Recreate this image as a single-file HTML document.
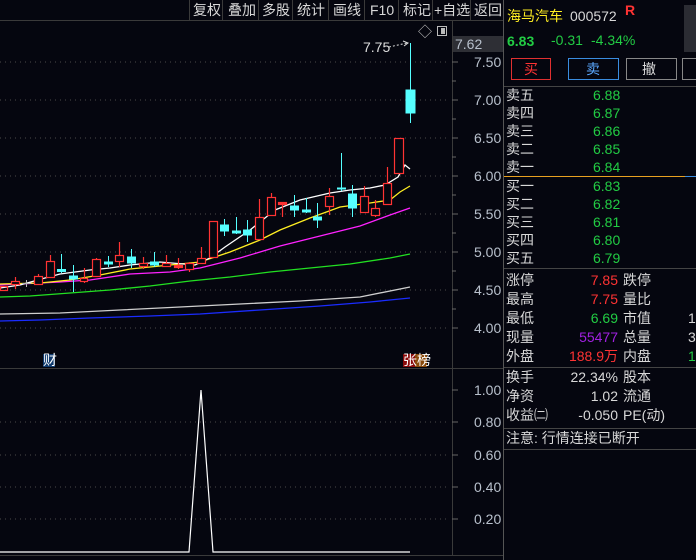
<!DOCTYPE html>
<html><head><meta charset="utf-8"><style>
html,body{margin:0;padding:0;background:#05060f;width:696px;height:560px;overflow:hidden}
svg{display:block}
text{font-family:"Liberation Sans","Noto Sans CJK SC",sans-serif;font-size:14px}
</style></head><body>
<svg width="696" height="560" viewBox="0 0 696 560" xmlns="http://www.w3.org/2000/svg">
<rect width="696" height="560" fill="#05060f"/>
<!-- toolbar -->
<g fill="#d8d8d8" font-size="13">
<text x="193" y="15" font-size="13">复权</text><text x="228" y="15" font-size="13">叠加</text><text x="262" y="15" font-size="13">多股</text>
<text x="297" y="15" font-size="13">统计</text><text x="333" y="15" font-size="13">画线</text><text x="370" y="15" font-size="13">F10</text>
<text x="403" y="15" font-size="13">标记</text><text x="434" y="15" font-size="13">+自选</text><text x="474" y="15" font-size="13">返回</text>
</g>
<g stroke="#3a3a3a" stroke-width="1">
<line x1="189.5" y1="0" x2="189.5" y2="20"/><line x1="222.5" y1="0" x2="222.5" y2="20"/>
<line x1="258.5" y1="0" x2="258.5" y2="20"/><line x1="292.5" y1="0" x2="292.5" y2="20"/>
<line x1="328.5" y1="0" x2="328.5" y2="20"/><line x1="364.5" y1="0" x2="364.5" y2="20"/>
<line x1="398.5" y1="0" x2="398.5" y2="20"/><line x1="432.5" y1="0" x2="432.5" y2="20"/>
<line x1="470.5" y1="0" x2="470.5" y2="20"/>
<line x1="0" y1="20.5" x2="503" y2="20.5"/>
<line x1="452.5" y1="20" x2="452.5" y2="556"/>
<line x1="0" y1="368.5" x2="503" y2="368.5"/>
<line x1="0" y1="555.5" x2="503" y2="555.5"/>
</g>
<line x1="503.5" y1="0" x2="503.5" y2="560" stroke="#555" />
<!-- grid -->
<g stroke="#4a4a4a" stroke-dasharray="1,4">
<line x1="0" y1="62" x2="450" y2="62"/><line x1="0" y1="100" x2="450" y2="100"/>
<line x1="0" y1="138" x2="450" y2="138"/><line x1="0" y1="176" x2="450" y2="176"/>
<line x1="0" y1="214" x2="450" y2="214"/><line x1="0" y1="252" x2="450" y2="252"/>
<line x1="0" y1="290" x2="450" y2="290"/><line x1="0" y1="328" x2="450" y2="328"/>
<line x1="0" y1="422" x2="450" y2="422"/><line x1="0" y1="455" x2="450" y2="455"/>
<line x1="0" y1="487" x2="450" y2="487"/><line x1="0" y1="519" x2="450" y2="519"/>
</g>
<g stroke="#666">
<line x1="452" y1="62" x2="458" y2="62"/><line x1="452" y1="81" x2="456" y2="81"/><line x1="452" y1="100" x2="458" y2="100"/>
<line x1="452" y1="119" x2="456" y2="119"/><line x1="452" y1="138" x2="458" y2="138"/><line x1="452" y1="157" x2="456" y2="157"/>
<line x1="452" y1="176" x2="458" y2="176"/><line x1="452" y1="195" x2="456" y2="195"/><line x1="452" y1="214" x2="458" y2="214"/>
<line x1="452" y1="233" x2="456" y2="233"/><line x1="452" y1="252" x2="458" y2="252"/><line x1="452" y1="271" x2="456" y2="271"/>
<line x1="452" y1="290" x2="458" y2="290"/><line x1="452" y1="309" x2="456" y2="309"/><line x1="452" y1="328" x2="458" y2="328"/>
<line x1="452" y1="390" x2="458" y2="390"/><line x1="452" y1="422" x2="458" y2="422"/><line x1="452" y1="455" x2="458" y2="455"/>
<line x1="452" y1="487" x2="458" y2="487"/><line x1="452" y1="519" x2="458" y2="519"/>
</g>
<rect x="453" y="36" width="50" height="16" fill="#2e2f35"/>
<g fill="#b8c0cc">
<text x="455" y="49">7.62</text>
<text x="474" y="67">7.50</text><text x="474" y="105">7.00</text><text x="474" y="143">6.50</text>
<text x="474" y="181">6.00</text><text x="474" y="219">5.50</text><text x="474" y="257">5.00</text>
<text x="474" y="295">4.50</text><text x="474" y="333">4.00</text>
<text x="474" y="395">1.00</text><text x="474" y="427">0.80</text><text x="474" y="460">0.60</text>
<text x="474" y="492">0.40</text><text x="474" y="524">0.20</text>
</g>
<text x="418" y="37" fill="#bbb" font-size="12">◇</text>
<rect x="437.5" y="26.5" width="9" height="9" fill="none" stroke="#bbb"/><rect x="441" y="28" width="4" height="6" fill="#bbb"/>
<text x="363" y="52" fill="#ddd" font-size="13">7.75</text>
<path d="M389 47 L407 43" stroke="#ddd" stroke-dasharray="2,2"/><path d="M403 41 L408 43 L404 46" stroke="#ddd" fill="none"/>
<!-- MA lines -->
<g fill="none" stroke-width="1.3">
<polyline stroke="#1a2cff" points="0,321 40,320 90,318 150,316 200,314 260,310 320,306 370,302 410,298"/>
<polyline stroke="#cfcfcf" points="0,314 60,313 120,310 180,307 240,304 300,301 360,297 410,287"/>
<polyline stroke="#22e022" points="0,297 30,296 70,293 110,290 150,286 190,281 230,277 270,272 310,268 350,264 390,258 410,254"/>
<polyline stroke="#ff22ff" points="0,285 60,282 90,280 130,274 170,272 200,268 240,258 280,246 320,236 360,226 390,215 410,208"/>
<polyline stroke="#ffee22" points="0,284 40,283 70,280 100,275 130,269 160,266 200,262 230,252 260,240 280,230 310,218 340,207 370,203 390,200 400,192 410,186"/>
<polyline stroke="#ffffff" points="0,288 20,285 45,278 60,274 90,270 110,268 130,265 160,262 195,265 210,258 225,247 250,230 275,210 300,200 330,193 350,190 370,188 385,185 398,177 405,165 410,169"/>
</g>
<!-- candles -->
<g stroke="#ff3333" fill="none" stroke-width="1.2">
<rect x="0.5" y="286.5" width="7" height="4"/>
<line x1="15.5" y1="277" x2="15.5" y2="289"/><rect x="11.5" y="281.5" width="8" height="3" fill="#05060f"/>
<line x1="38.5" y1="274" x2="38.5" y2="284"/><rect x="34.5" y="276.5" width="8" height="8" fill="#05060f"/>
<line x1="50.5" y1="255" x2="50.5" y2="277"/><rect x="46.5" y="261.5" width="8" height="16" fill="#05060f"/>
<line x1="84.5" y1="268" x2="84.5" y2="283"/><rect x="80.5" y="278.5" width="7" height="3" fill="#05060f"/>
<line x1="96.5" y1="258" x2="96.5" y2="276"/><rect x="92.5" y="259.5" width="8" height="17" fill="#05060f"/>
<line x1="119.5" y1="242" x2="119.5" y2="267"/><rect x="115.5" y="255.5" width="8" height="6" fill="#05060f"/>
<line x1="143.5" y1="257" x2="143.5" y2="269"/><rect x="139.5" y="263.5" width="8" height="3" fill="#05060f"/>
<line x1="166.5" y1="255" x2="166.5" y2="267"/><rect x="162.5" y="263.5" width="8" height="3" fill="#05060f"/>
<line x1="178.5" y1="258" x2="178.5" y2="269"/><rect x="174.5" y="265.5" width="8" height="2" fill="#ff3333"/>
<line x1="189.5" y1="262" x2="189.5" y2="272"/><rect x="185.5" y="263.5" width="8" height="6" fill="#05060f"/>
<line x1="201.5" y1="247" x2="201.5" y2="263"/><rect x="197.5" y="258.5" width="8" height="5" fill="#05060f"/>
<rect x="209.5" y="221.5" width="8" height="36" fill="#05060f"/>
<line x1="259.5" y1="199" x2="259.5" y2="217"/><rect x="255.5" y="217.5" width="8" height="22" fill="#05060f"/>
<line x1="271.5" y1="193" x2="271.5" y2="197"/><rect x="267.5" y="197.5" width="8" height="18" fill="#05060f"/>
<line x1="282.5" y1="204" x2="282.5" y2="217"/><rect x="278.5" y="202.5" width="8" height="2" fill="#ff3333"/>
<line x1="329.5" y1="188" x2="329.5" y2="215"/><rect x="325.5" y="196.5" width="8" height="10" fill="#05060f"/>
<line x1="364.5" y1="186" x2="364.5" y2="196"/><rect x="360.5" y="196.5" width="8" height="16" fill="#05060f"/>
<line x1="375.5" y1="200" x2="375.5" y2="217"/><rect x="371.5" y="208.5" width="8" height="7" fill="#05060f"/>
<line x1="387.5" y1="167" x2="387.5" y2="183"/><rect x="383.5" y="183.5" width="8" height="21" fill="#05060f"/>
<rect x="394.5" y="138.5" width="9" height="35" fill="#05060f"/>
</g>
<g stroke="#55ffff" fill="#55ffff">
<line x1="26.5" y1="280" x2="26.5" y2="287" stroke="#bbb"/><line x1="22" y1="283.5" x2="31" y2="283.5" stroke="#bbb"/>
<line x1="61.5" y1="254" x2="61.5" y2="273"/><rect x="57.5" y="269.5" width="8" height="2"/>
<line x1="73.5" y1="265" x2="73.5" y2="292"/><rect x="69.5" y="276" width="8" height="3"/>
<line x1="108.5" y1="256" x2="108.5" y2="267"/><rect x="104.5" y="262" width="8" height="2"/>
<line x1="131.5" y1="249" x2="131.5" y2="268"/><rect x="127.5" y="257" width="8" height="6"/>
<line x1="154.5" y1="252" x2="154.5" y2="267"/><rect x="150.5" y="262" width="8" height="3"/>
<line x1="224.5" y1="219" x2="224.5" y2="236"/><rect x="220.5" y="225" width="8" height="6"/>
<line x1="236.5" y1="217" x2="236.5" y2="234"/><rect x="232.5" y="231" width="8" height="2"/>
<line x1="247.5" y1="220" x2="247.5" y2="242"/><rect x="243.5" y="230" width="8" height="5"/>
<line x1="294.5" y1="195" x2="294.5" y2="217"/><rect x="290.5" y="206" width="8" height="4"/>
<line x1="306.5" y1="198" x2="306.5" y2="213"/><rect x="302.5" y="210" width="8" height="2"/>
<line x1="317.5" y1="203" x2="317.5" y2="228"/><rect x="313.5" y="217" width="8" height="3"/>
<line x1="341.5" y1="153" x2="341.5" y2="191"/><rect x="337.5" y="188" width="8" height="1"/>
<line x1="352.5" y1="185" x2="352.5" y2="217"/><rect x="348.5" y="194" width="8" height="14"/>
<line x1="410.5" y1="43" x2="410.5" y2="123"/><rect x="406" y="90" width="9" height="23"/>
</g>
<!-- markers -->
<rect x="43" y="354" width="12" height="13" fill="#0f3a6e"/><text x="43" y="365" fill="#fff" font-size="12">财</text>
<rect x="403" y="354" width="12" height="13" fill="#8a0b0b"/><rect x="415" y="354" width="12" height="13" fill="#8a4a0b"/>
<text x="403" y="365" fill="#fff" font-size="12">张榜</text>
<!-- sub chart -->
<polyline fill="none" stroke="#fff" stroke-width="1.2" points="0,552 189,552 201,390 213,552 410,552"/>
<!-- right panel -->
<text x="507" y="21" fill="#ffee22" font-size="15">海马汽车</text>
<text x="570" y="21" fill="#d8d8d8" font-size="15">000572</text>
<text x="625" y="15" fill="#ff3333" font-size="10" font-weight="bold">R</text>
<rect x="684" y="5" width="12" height="47" fill="#2b2c33"/>
<text x="507" y="46" fill="#22cc44" font-size="17" font-weight="bold">6.83</text>
<text x="551" y="45" fill="#22cc44">-0.31</text>
<text x="591" y="45" fill="#22cc44">-4.34%</text>
<rect x="511.5" y="58.5" width="39" height="21" fill="none" stroke="#e03030"/><text x="524" y="74" fill="#ff3333">买</text>
<rect x="568.5" y="58.5" width="50" height="21" fill="none" stroke="#3a8de0"/><text x="586" y="74" fill="#5aa8ff">卖</text>
<rect x="626.5" y="58.5" width="50" height="21" fill="none" stroke="#888"/><text x="642" y="74" fill="#ddd">撤</text>
<rect x="682.5" y="58.5" width="20" height="21" fill="none" stroke="#888"/>
<line x1="504" y1="86.5" x2="696" y2="86.5" stroke="#444"/>
<g fill="#d8d8d8">
<text x="506" y="100">卖五</text><text x="506" y="118">卖四</text><text x="506" y="136">卖三</text><text x="506" y="154">卖二</text><text x="506" y="172">卖一</text>
<text x="506" y="191">买一</text><text x="506" y="209">买二</text><text x="506" y="227">买三</text><text x="506" y="245">买四</text><text x="506" y="263">买五</text>
</g>
<g fill="#22cc44">
<text x="593" y="100">6.88</text><text x="593" y="118">6.87</text><text x="593" y="136">6.86</text><text x="593" y="154">6.85</text><text x="593" y="172">6.84</text>
<text x="593" y="191">6.83</text><text x="593" y="209">6.82</text><text x="593" y="227">6.81</text><text x="593" y="245">6.80</text><text x="593" y="263">6.79</text>
</g>
<line x1="504" y1="176.5" x2="685" y2="176.5" stroke="#e8a020"/><line x1="685" y1="176.5" x2="696" y2="176.5" stroke="#3a8de0"/>
<line x1="504" y1="268.5" x2="696" y2="268.5" stroke="#444"/>
<g fill="#d8d8d8">
<text x="506" y="285">涨停</text><text x="506" y="304">最高</text><text x="506" y="323">最低</text><text x="506" y="342">现量</text><text x="506" y="361">外盘</text>
<text x="623" y="285">跌停</text><text x="623" y="304">量比</text><text x="623" y="323">市值</text><text x="623" y="342">总量</text><text x="623" y="361">内盘</text>
<text x="688" y="323">1</text><text x="688" y="342">3</text>
<text x="506" y="382">换手</text><text x="506" y="401">净资</text><text x="506" y="420">收益㈡</text>
<text x="623" y="382">股本</text><text x="623" y="401">流通</text><text x="623" y="420">PE(动)</text>
<text x="618" y="382" text-anchor="end">22.34%</text><text x="618" y="401" text-anchor="end">1.02</text><text x="618" y="420" text-anchor="end">-0.050</text>
<text x="506" y="443">注意: 行情连接已断开</text>
</g>
<text x="688" y="361" fill="#22cc44">1</text>
<text x="618" y="285" text-anchor="end" fill="#ff3333">7.85</text>
<text x="618" y="304" text-anchor="end" fill="#ff3333">7.75</text>
<text x="618" y="323" text-anchor="end" fill="#22cc44">6.69</text>
<text x="618" y="342" text-anchor="end" fill="#a020e0">55477</text>
<text x="618" y="361" text-anchor="end" fill="#ff3333">188.9万</text>
<line x1="504" y1="367.5" x2="696" y2="367.5" stroke="#444"/>
<line x1="504" y1="428.5" x2="696" y2="428.5" stroke="#444"/>
<line x1="504" y1="449.5" x2="696" y2="449.5" stroke="#444"/>
</svg>
</body></html>
